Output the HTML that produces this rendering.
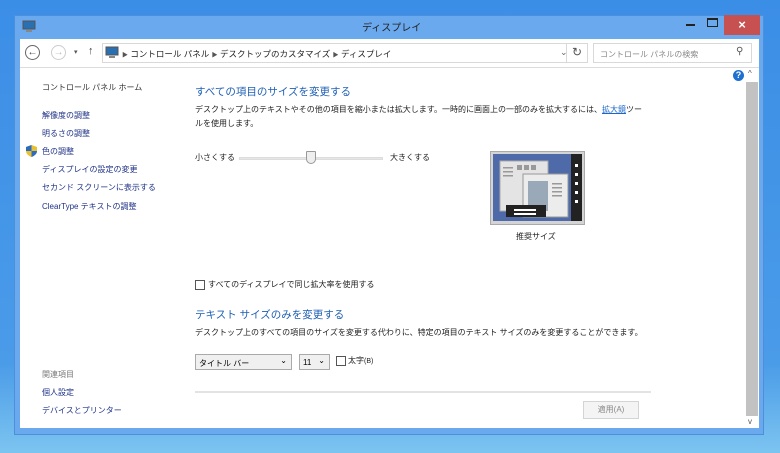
<!DOCTYPE html><html><head><meta charset="utf-8"><style>
*{margin:0;padding:0;box-sizing:border-box}
body{width:780px;height:453px;overflow:hidden;background:linear-gradient(#3b8ee6,#4a9be8 80%,#7cc4f0);font-family:"Liberation Sans","Noto Sans CJK JP",sans-serif;font-size:8px;color:#000;position:relative}
.win{position:absolute;left:14px;top:15px;width:750px;height:420px;background:#6aa9ee;border:1px solid #4c8fda}
.a{position:absolute;white-space:nowrap}
.nav{color:#1e3287;font-size:8px}
</style></head><body>
<div class="win"></div>
<div class="a" style="left:362px;top:19px;font-size:10px;color:#222">ディスプレイ</div>
<svg class="a" style="left:22px;top:20px" width="14" height="13"><rect x="1" y="1" width="12" height="8" fill="#2a6fb0" stroke="#555"/><rect x="4" y="10" width="6" height="2" fill="#888"/></svg>
<div class="a" style="left:686px;top:24px;width:9px;height:2px;background:#222"></div>
<div class="a" style="left:707px;top:18px;width:11px;height:9px;border:1px solid #222;border-top-width:2px"></div>
<div class="a" style="left:724px;top:15px;width:36px;height:20px;background:#c75050;color:#fff;font-size:13px;text-align:center;line-height:19px;font-weight:bold">×</div>
<div class="a" style="left:20px;top:39px;width:739px;height:389px;background:#fff"></div>
<div class="a" style="left:20px;top:67px;width:739px;height:1px;background:#dcdcdc"></div>
<div class="a" style="left:25px;top:45px;width:15px;height:15px;border:1px solid #666;border-radius:50%;font-size:10px;text-align:center;line-height:13px;color:#444">←</div>
<div class="a" style="left:51px;top:45px;width:15px;height:15px;border:1px solid #ccc;border-radius:50%;font-size:10px;text-align:center;line-height:13px;color:#bbb">→</div>
<div class="a" style="left:74px;top:48px;font-size:7px;color:#555">▾</div>
<div class="a" style="left:88px;top:45px;font-size:11px;color:#444">↑</div>
<div class="a" style="left:102px;top:43px;width:486px;height:20px;border:1px solid #d9d9d9"></div>
<svg class="a" style="left:105px;top:46px" width="14" height="13"><rect x="1" y="1" width="12" height="8" fill="#2a6fb0" stroke="#555"/><rect x="4" y="10" width="6" height="2" fill="#888"/></svg>
<div class="a" style="left:122px;top:48px;color:#222;font-size:8.5px"><span style="font-size:6px;color:#555">▶</span> コントロール パネル <span style="font-size:6px;color:#555">▶</span> デスクトップのカスタマイズ <span style="font-size:6px;color:#555">▶</span> ディスプレイ</div>
<div class="a" style="left:560px;top:47px;color:#666;font-size:9px">⌄</div>
<div class="a" style="left:566px;top:43px;width:1px;height:20px;background:#d9d9d9"></div>
<div class="a" style="left:572px;top:45px;color:#555;font-size:12px">↻</div>
<div class="a" style="left:593px;top:43px;width:159px;height:20px;border:1px solid #d9d9d9;color:#888;padding:5px 6px;font-size:8px">コントロール パネルの検索</div>
<div class="a" style="left:736px;top:46px;color:#555;font-size:10px">⚲</div>
<div class="a" style="left:733px;top:70px;width:11px;height:11px;border-radius:50%;background:#1d6fd0;color:#fff;font-size:9px;font-weight:bold;text-align:center;line-height:11px">?</div>
<div class="a" style="left:746px;top:82px;width:12px;height:334px;background:#c2c2c2"></div>
<div class="a" style="left:748px;top:69px;color:#555;font-size:8px">^</div>
<div class="a" style="left:748px;top:417px;color:#555;font-size:8px">v</div>
<div class="a" style="left:42px;top:82px;color:#333">コントロール パネル ホーム</div>
<div class="a nav" style="left:42px;top:110px">解像度の調整</div>
<div class="a nav" style="left:42px;top:128px">明るさの調整</div>
<svg class="a" style="left:26px;top:145px" width="11" height="12"><path d="M5.5 0L11 2V6C11 9 8 11 5.5 12C3 11 0 9 0 6V2Z" fill="#e8c030"/><path d="M5.5 0V6H0V2ZM5.5 6H11C11 9 8 11 5.5 12Z" fill="#2a6cc0"/></svg>
<div class="a nav" style="left:42px;top:146px">色の調整</div>
<div class="a nav" style="left:42px;top:164px">ディスプレイの設定の変更</div>
<div class="a nav" style="left:42px;top:182px">セカンド スクリーンに表示する</div>
<div class="a nav" style="left:42px;top:201px">ClearType テキストの調整</div>
<div class="a" style="left:42px;top:369px;color:#777">関連項目</div>
<div class="a nav" style="left:42px;top:387px">個人設定</div>
<div class="a nav" style="left:42px;top:405px">デバイスとプリンター</div>
<div class="a" style="left:195px;top:84px;color:#1e5fb4;font-size:10.5px">すべての項目のサイズを変更する</div>
<div class="a" style="left:195px;top:103px;color:#222;line-height:14px">デスクトップ上のテキストやその他の項目を縮小または拡大します。一時的に画面上の一部のみを拡大するには、<span style="color:#1a66cc;text-decoration:underline">拡大鏡</span>ツー<br>ルを使用します。</div>
<div class="a" style="left:195px;top:152px;color:#222">小さくする</div>
<div class="a" style="left:239px;top:157px;width:144px;height:3px;background:#e6e6e6;border:1px solid #ddd"></div>
<div class="a" style="left:306px;top:151px;width:10px;height:13px;background:#eee;border:1px solid #999;border-radius:1px 1px 5px 5px"></div>
<div class="a" style="left:390px;top:152px;color:#222">大きくする</div>
<svg class="a" style="left:490px;top:151px" width="95" height="74"><rect x="0.5" y="0.5" width="94" height="73" fill="#d4d4d4" stroke="#aaa"/><rect x="3" y="3" width="89" height="67" fill="#4f6aa8"/><rect x="81" y="3" width="11" height="67" fill="#222"/><g fill="#fff"><rect x="85" y="13" width="3" height="3"/><rect x="85" y="22" width="3" height="3"/><rect x="85" y="31" width="3" height="3"/><rect x="85" y="40" width="3" height="3"/><rect x="85" y="49" width="3" height="3"/></g><rect x="10" y="10" width="48" height="50" fill="#e4e4e4" stroke="#aaa"/><g fill="#999"><rect x="13" y="16" width="10" height="1.5"/><rect x="13" y="20" width="10" height="1.5"/><rect x="13" y="24" width="10" height="1.5"/><rect x="27" y="14" width="5" height="5"/><rect x="34" y="14" width="5" height="5"/><rect x="41" y="14" width="5" height="5"/></g><rect x="33" y="23" width="45" height="43" fill="#ececec" stroke="#999"/><rect x="38" y="30" width="20" height="30" fill="#9aa9b8"/><g fill="#999"><rect x="62" y="32" width="10" height="1.5"/><rect x="62" y="36" width="10" height="1.5"/><rect x="62" y="40" width="10" height="1.5"/><rect x="62" y="44" width="10" height="1.5"/></g><rect x="16" y="54" width="40" height="12" fill="#222"/><rect x="24" y="58" width="22" height="2" fill="#fff"/><rect x="24" y="62" width="22" height="2" fill="#fff"/></svg>
<div class="a" style="left:516px;top:231px;color:#222">推奨サイズ</div>
<div class="a" style="left:195px;top:280px;width:10px;height:10px;border:1px solid #555"></div>
<div class="a" style="left:208px;top:279px;color:#222">すべてのディスプレイで同じ拡大率を使用する</div>
<div class="a" style="left:195px;top:307px;color:#1e5fb4;font-size:10.5px">テキスト サイズのみを変更する</div>
<div class="a" style="left:195px;top:327px;color:#222">デスクトップ上のすべての項目のサイズを変更する代わりに、特定の項目のテキスト サイズのみを変更することができます。</div>
<div class="a" style="left:195px;top:354px;width:97px;height:16px;border:1px solid #aaa;background:#f0f0f0;padding:3px 3px;font-size:8px">タイトル バー<span style="position:absolute;right:4px;top:1px;font-size:8px">⌄</span></div>
<div class="a" style="left:299px;top:354px;width:31px;height:16px;border:1px solid #aaa;background:#f0f0f0;padding:3px 3px;font-size:8px">11<span style="position:absolute;right:4px;top:1px;font-size:8px">⌄</span></div>
<div class="a" style="left:336px;top:356px;width:10px;height:10px;border:1px solid #555"></div>
<div class="a" style="left:348px;top:355px;color:#222">太字<span style="font-size:7px">(B)</span></div>
<div class="a" style="left:195px;top:391px;width:456px;height:2px;background:#e3e3e3"></div>
<div class="a" style="left:583px;top:401px;width:56px;height:18px;border:1px solid #d4d4d4;background:#f4f4f4;color:#888;text-align:center;line-height:16px">適用(A)</div>
</body></html>
